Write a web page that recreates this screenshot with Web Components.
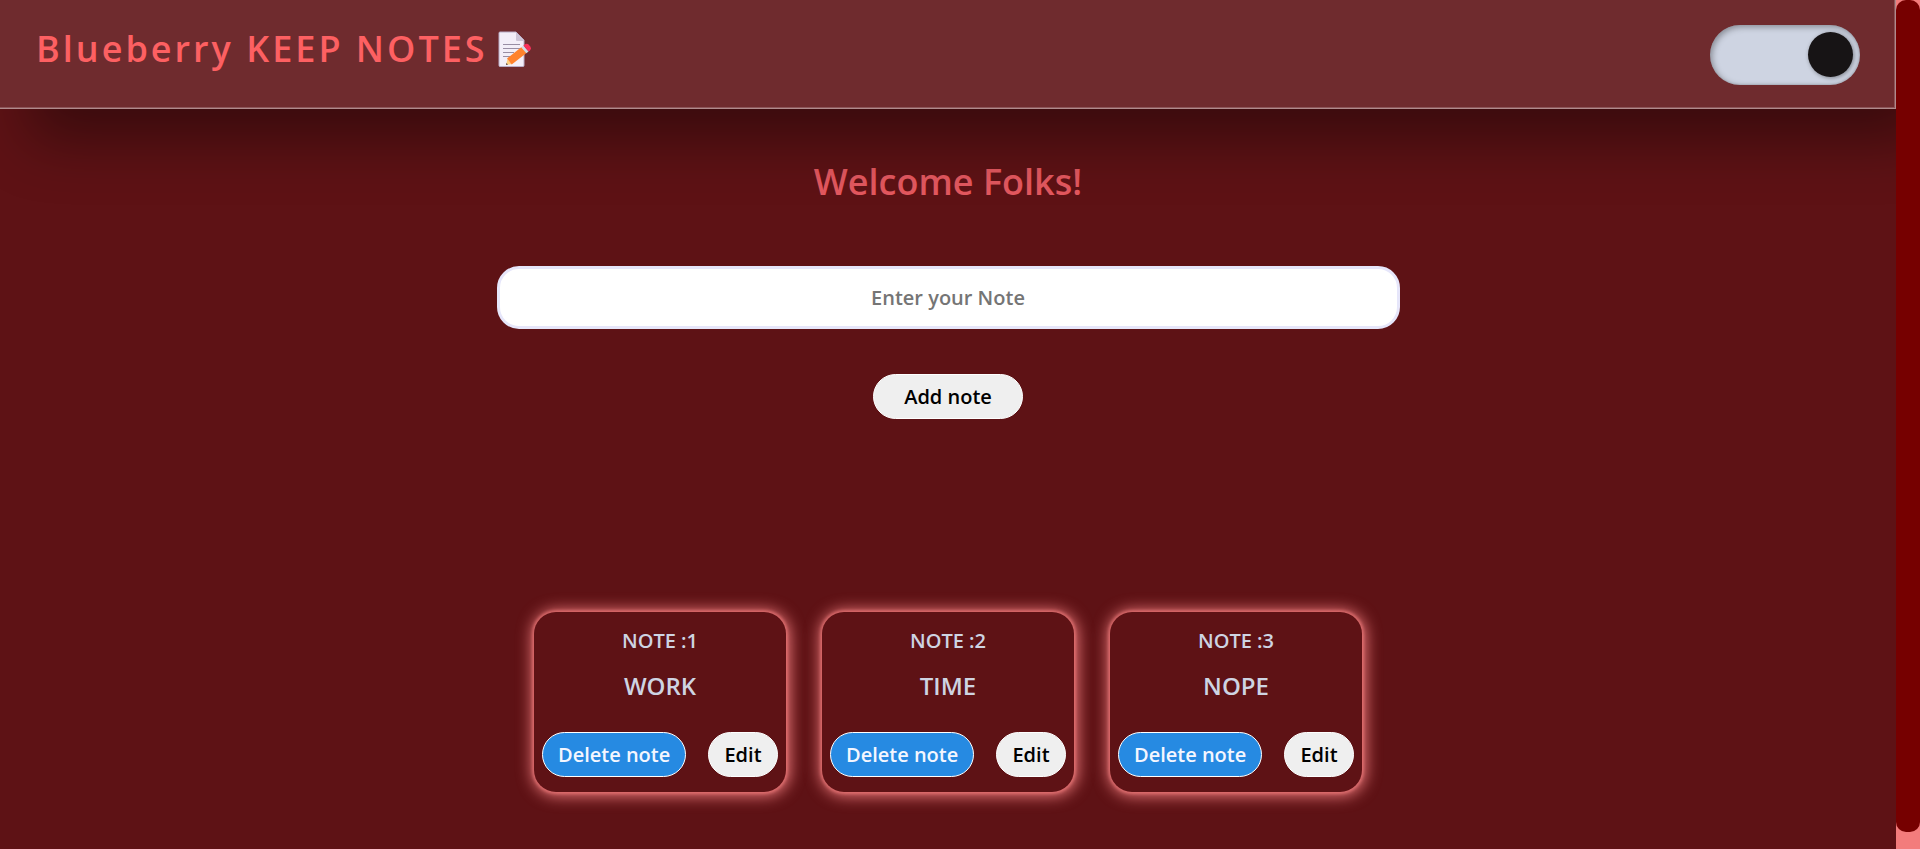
<!DOCTYPE html>
<html lang="en">
<head>
<meta charset="utf-8">
<meta name="viewport" content="width=device-width, initial-scale=1">
<title>Blueberry KEEP NOTES</title>
<style>
  html, body { margin: 0; min-height: 100%; background: #5e1215; }
  body { font-family: "Open Sans", sans-serif; font-weight: 600; }
</style>
</head>
<body>
<notes-app></notes-app>
<script>
const define = (name, html) => {
  const template = document.createElement('template');
  template.innerHTML = html;
  customElements.define(name, class extends HTMLElement {
    constructor() {
      super();
      this.attachShadow({ mode: 'open' }).append(template.content.cloneNode(true));
    }
  });
};

define('memo-icon', `
  <style>
    :host { display: block; width: 36px; height: 36px; }
    svg { display: block; width: 100%; height: 100%; }
  </style>
  <svg viewBox="0 0 36 36" aria-hidden="true">
    <path d="M3 1h16l8 8v25.500a1 1 0 0 1-1 1H3a1 1 0 0 1-1-1V2a1 1 0 0 1 1-1z" fill="#f3eef8" stroke="#b9adc6" stroke-width="1"/>
    <path d="M19 1v8a1 1 0 0 0 1 1h7.300z" fill="#cdc4d6"/>
    <path d="M6 13.500h17M6 17.500h17M6 21.500h11M6 25.500h7" stroke="#998ea4" stroke-width="1.200"/>
    <path d="M10.500 28 9 34l5.500-1z" fill="#ffce7c"/>
    <path d="M9.400 32 9 34l2-.4z" fill="#4a3b3f"/>
    <path d="M10 27.500 24.500 16l5 6L14.700 33.500z" fill="#ff822d"/>
    <path d="M24.200 16.200l2.200-1.800 5.200 6-2.300 1.800z" fill="#d3dce4"/>
    <path d="M26.400 14.400l1.600-1.200q2-1.300 3.600.4l1.800 2.200q1.500 1.900-.3 3.400l-1.500 1.200z" fill="#f8315a"/>
  </svg>`);

define('theme-switch', `
  <style>
    :host { display: block; }
    input {
      appearance: none; box-sizing: border-box; display: flex; align-items: flex-start;
      width: 150px; height: 60px; margin: 0; padding: 7px; border-radius: 30px;
      background: #ced4e2; cursor: pointer;
      box-shadow: inset 2px 2px 6px rgba(0, 0, 0, .35), inset -1px -1px 2px rgba(0, 0, 0, .1);
    }
    input::before {
      content: ""; width: 45px; height: 45px; border-radius: 50%; background: #171415;
      box-shadow: 1px 1px 4px rgba(0, 0, 0, .4);
    }
    input:checked { justify-content: flex-end; }
  </style>
  <input type="checkbox" checked aria-label="Dark theme">`);

define('app-header', `
  <style>
    :host {
      display: flex; justify-content: space-between; align-items: flex-start;
      padding: 25px 35px 23px 36px; position: relative; z-index: 1; background: #6f2b2e;
      box-shadow: inset -1px -1px #8d5558, 30px 30px 60px rgba(0, 0, 0, .4);
      border: 0 solid #b08a8c; border-width: 0 1px 1px 0; color: #fd6062;
    }
    h1 { display: flex; align-items: center; gap: 9px; margin: 0; font-size: 36px; line-height: 48px; font-weight: 600; letter-spacing: 3px; }
  </style>
  <h1><slot></slot><memo-icon></memo-icon></h1>
  <theme-switch></theme-switch>`);

define('note-form', `
  <style>
    :host { display: flex; flex-direction: column; align-items: center; gap: 45px; }
    input, button { font: inherit; font-size: 20px; }
    input {
      box-sizing: border-box; width: 100%; max-width: 903px; height: 63px; padding: 0 24px;
      border: 3px solid #e6e6fa; border-radius: 22px; background: #fff; text-align: center;
    }
    input::placeholder { color: #757575; }
    button {
      width: 150px; height: 45px; border: 1px solid #fff; border-radius: 23px;
      background: #efefef; color: #000;
    }
  </style>
  <input type="text" placeholder="Enter your Note" aria-label="Enter your Note">
  <button type="button">Add note</button>`);

define('note-card', `
  <style>
    :host {
      display: flex; flex-direction: column; align-items: center; box-sizing: border-box;
      width: 252px; padding: 15px 8px; border-radius: 22px; background: #5e1215; color: #ced4e2;
      box-shadow: 0 0 3px 2px rgba(243, 124, 124, .6), 1px 1px 15px 3px #e8787a;
    }
    h2, p { margin: 0 0 15px; font-weight: 600; }
    h2 { font-size: 20px; line-height: 27px; }
    p { margin-bottom: 30px; font-size: 24px; line-height: 33px; }
    div { display: flex; justify-content: space-between; align-self: stretch; }
    button {
      min-width: 70px; height: 45px; padding: 0 15px; border: 1px solid #fff; border-radius: 23px;
      background: #efefef; color: #000; font: inherit; font-size: 20px; white-space: nowrap;
    }
    .delete { background: #268ae2; color: #f4f6ff; }
  </style>
  <h2><slot name="label"></slot></h2>
  <p><slot></slot></p>
  <div><button type="button" class="delete">Delete note</button><button type="button">Edit</button></div>`);

define('page-scrollbar', `
  <style>
    :host { display: flex; position: sticky; top: 0; height: 100vh; background: #f37c7c; }
    div { flex: 1; height: 98%; border-radius: 10px; background: #760000; }
  </style>
  <div></div>`);

define('notes-app', `
  <style>
    :host { display: grid; grid-template-columns: minmax(0, 1fr) 24px; min-height: 100vh; }
    .page { overflow: clip; }
    main { display: flex; flex-direction: column; padding: 48px 24px 57px; }
    h2 { margin: 0 0 60px; text-align: center; font-size: 36px; line-height: 49px; font-weight: 600; color: #e3585f; }
    section { display: flex; flex-wrap: wrap; justify-content: center; gap: 36px; margin-top: 193px; }
  </style>
  <div class="page">
    <app-header>Blueberry KEEP NOTES</app-header>
    <main>
      <h2>Welcome Folks!</h2>
      <note-form></note-form>
      <section aria-label="Notes">
        <note-card><span slot="label">NOTE :1</span>WORK</note-card>
        <note-card><span slot="label">NOTE :2</span>TIME</note-card>
        <note-card><span slot="label">NOTE :3</span>NOPE</note-card>
      </section>
    </main>
  </div>
  <page-scrollbar aria-hidden="true"></page-scrollbar>`);
</script>
</body>
</html>
